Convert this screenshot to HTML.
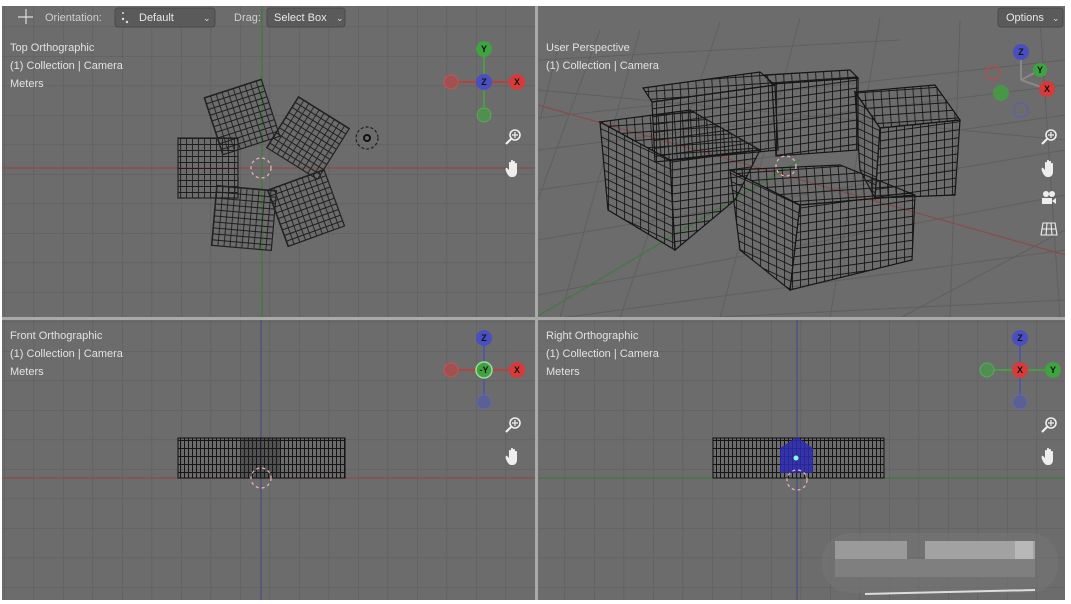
<!DOCTYPE html>
<html><head><meta charset="utf-8"><style>
html,body{margin:0;padding:0;background:#fff;width:1071px;height:604px;overflow:hidden}
svg{display:block}
text{font-family:"Liberation Sans",sans-serif}
</style></head><body>
<svg width="1071" height="604" viewBox="0 0 1071 604" xmlns="http://www.w3.org/2000/svg">
<defs>
<pattern id="g" x="4" y="-3" width="29.5" height="29.5" patternUnits="userSpaceOnUse">
<path d="M0 0H29.5M0 0V29.5" stroke="#5e5e5e" stroke-width="1.2" fill="none"/>
</pattern>
<pattern id="m" width="6" height="6" patternUnits="userSpaceOnUse">
<path d="M0 0.5H6M0.5 0V6" stroke="#1e1e1e" stroke-width="0.9" fill="none"/>
</pattern>
<pattern id="mp" width="8" height="8" patternUnits="userSpaceOnUse" patternTransform="rotate(-4)">
<path d="M0 0.5H8M0.5 0V8" stroke="#181818" stroke-width="0.9" fill="none"/>
</pattern>
<pattern id="mp2" width="8" height="8" patternUnits="userSpaceOnUse" patternTransform="skewY(25)">
<path d="M0 0.5H8M0.5 0V8" stroke="#181818" stroke-width="0.9" fill="none"/>
</pattern>
<pattern id="mp3" width="8" height="8" patternUnits="userSpaceOnUse" patternTransform="skewY(-8)">
<path d="M0 0.5H8M0.5 0V8" stroke="#181818" stroke-width="0.9" fill="none"/>
</pattern>
<pattern id="mv" width="4" height="8" patternUnits="userSpaceOnUse">
<path d="M0.5 0V8M0 0.5H4" stroke="#151515" stroke-width="1" fill="none"/>
</pattern>
<g id="zm"><circle cx="2" cy="-2" r="5" fill="none" stroke="#eee" stroke-width="1.6"/><path d="M-2 2L-7 7" stroke="#eee" stroke-width="2.2"/><path d="M2 -5V1M-1 -2H5" stroke="#eee" stroke-width="1.2"/></g>
<g id="hd"><path d="M-5 6C-7 3-8 0-7-1-6-2-5 0-4 1V-6C-4-7.5-2-7.5-2-6V-1-8C-2-9.5 0-9.5 0-8V-1-7C0-8.5 2-8.5 2-7V-1-5C2-6.5 4-6.5 4-5V3C4 6 2 8 0 8H-2C-3 8-4 7-5 6Z" fill="#eee"/></g>
</defs>
<rect width="1071" height="604" fill="#fff"/>
<rect x="2" y="6" width="1063" height="594" fill="#6c6c6c"/>
<rect x="2" y="6" width="533" height="312" fill="url(#g)"/>
<rect x="2" y="320" width="533" height="280" fill="url(#g)"/>
<rect x="538" y="320" width="527" height="280" fill="url(#g)"/>
<g stroke="#5f5f5f" stroke-width="1" fill="none">
<path d="M538 118L1065 60M538 150L1065 85M538 190L1065 115M538 240L1065 150M538 295L1065 195M560 318L1065 250M700 318L1065 300"/>
<path d="M560 40L540 120M640 30L560 318M720 22L620 318M800 18L720 318M880 18L830 318M960 20L950 318M1040 20L1060 318M600 30L538 200"/>
<path d="M538 90L1065 140M538 60L900 40M900 318L1065 230"/>
</g>
<path d="M538 105L1065 255" stroke="#8a4b4b" stroke-width="1.2"/>
<path d="M538 316L800 160" stroke="#3f7a3f" stroke-width="1.2"/>
<path d="M2 168H535" stroke="#8c4a4a" stroke-width="1.3"/>
<path d="M262 6V318" stroke="#3e7a3e" stroke-width="1.3"/>
<path d="M2 478H535" stroke="#8c4a4a" stroke-width="1.3"/>
<path d="M261 320V600" stroke="#4a4f80" stroke-width="1.3"/>
<path d="M538 478H1065" stroke="#3e7a3e" stroke-width="1.3"/>
<path d="M797 320V600" stroke="#4a4f80" stroke-width="1.3"/>
<rect x="535" y="6" width="3" height="594" fill="#a9a9a9"/>
<rect x="2" y="317" width="1063" height="3" fill="#a9a9a9"/>
<g stroke="#222" stroke-width="1.2">
<rect x="178" y="138" width="60" height="60" fill="url(#m)"/>
<rect x="-30" y="-30" width="60" height="60" fill="url(#m)" transform="translate(242,117) rotate(-18)"/>
<rect x="-30" y="-30" width="60" height="60" fill="url(#m)" transform="translate(308,138) rotate(32)"/>
<rect x="-30" y="-30" width="60" height="60" fill="url(#m)" transform="translate(306,208) rotate(-20)"/>
<rect x="-30" y="-30" width="60" height="60" fill="url(#m)" transform="translate(244,218) rotate(5)"/>
</g>
<circle cx="261" cy="168" r="10" fill="none" stroke="#e8b0b0" stroke-width="1.3" stroke-dasharray="3 3"/>
<circle cx="367" cy="138" r="11" fill="none" stroke="#222" stroke-width="1.2" stroke-dasharray="3 2"/>
<circle cx="367" cy="138" r="3" fill="none" stroke="#111" stroke-width="2"/>
<rect x="178" y="438" width="167" height="40" fill="url(#mv)" stroke="#111"/>
<rect x="240" y="438" width="40" height="40" fill="#222" opacity="0.35"/>
<circle cx="261" cy="478" r="10" fill="none" stroke="#e8b0b0" stroke-width="1.3" stroke-dasharray="3 3"/>
<rect x="713" y="438" width="171" height="40" fill="url(#mv)" stroke="#111"/>
<path d="M780 448L797 437L813 448V473H780Z" fill="#2a2ab0" opacity="0.85"/>
<circle cx="796" cy="458" r="2.5" fill="#8ff"/>
<circle cx="797" cy="480" r="10" fill="none" stroke="#e8b0b0" stroke-width="1.3" stroke-dasharray="3 3"/>
<!-- perspective boxes -->
<g stroke="#161616" stroke-width="1.2">
<polygon points="643,88 760,72 775,85 652,102" fill="url(#mp)"/>
<polygon points="652,102 775,85 778,150 655,162" fill="url(#mp3)"/>
<polygon points="765,75 850,70 858,78 772,84" fill="url(#mp)"/>
<polygon points="772,84 858,78 858,150 776,156" fill="url(#mp3)"/>
<polygon points="855,92 935,85 960,120 880,128" fill="url(#mp)"/>
<polygon points="880,128 960,120 955,195 875,198" fill="url(#mp3)"/>
<polygon points="855,92 880,128 875,198 860,170" fill="url(#mp2)"/>
<polygon points="600,122 690,110 760,150 670,160" fill="url(#mp)"/>
<polygon points="600,122 670,160 675,250 608,210" fill="url(#mp2)"/>
<polygon points="670,160 760,150 735,200 675,250" fill="url(#mp3)"/>
<polygon points="730,170 840,165 915,195 800,205" fill="url(#mp)"/>
<polygon points="730,170 800,205 790,290 740,250" fill="url(#mp2)"/>
<polygon points="800,205 915,195 912,260 790,290" fill="url(#mp3)"/>
</g>
<circle cx="786" cy="166" r="10" fill="none" stroke="#e8b0b0" stroke-width="1.3" stroke-dasharray="3 3"/>
<g fill="#ddd" font-size="11">
<g stroke="#ddd" stroke-width="1.2"><path d="M26 9V24M18 17H33"/></g>
<text x="45" y="21" fill="#cfcfcf">Orientation:</text>
<rect x="115" y="8" width="100" height="19" rx="3" fill="#5a5a5a" stroke="#4a4a4a"/>
<text x="139" y="21" fill="#e8e8e8">Default</text>
<text x="203" y="21" font-size="9">⌄</text>
<circle cx="123" cy="19" r="1.2"/><circle cx="127" cy="22" r="1.2"/><circle cx="123" cy="13" r="1"/>
<text x="234" y="21" fill="#cfcfcf">Drag:</text>
<rect x="267" y="8" width="78" height="19" rx="3" fill="#5a5a5a" stroke="#4a4a4a"/>
<text x="274" y="21" fill="#e8e8e8">Select Box</text>
<text x="336" y="21" font-size="9">⌄</text>
<rect x="998" y="8" width="65" height="19" rx="3" fill="#5a5a5a" stroke="#4a4a4a"/>
<text x="1006" y="21" fill="#e8e8e8">Options</text>
<text x="1052" y="21" font-size="9">⌄</text>
</g>
<g fill="#e2e2e2" font-size="11">
<text x="10" y="51">Top Orthographic</text><text x="10" y="69">(1) Collection | Camera</text><text x="10" y="87">Meters</text>
<text x="546" y="51">User Perspective</text><text x="546" y="69">(1) Collection | Camera</text>
<text x="10" y="339">Front Orthographic</text><text x="10" y="357">(1) Collection | Camera</text><text x="10" y="375">Meters</text>
<text x="546" y="339">Right Orthographic</text><text x="546" y="357">(1) Collection | Camera</text><text x="546" y="375">Meters</text>
</g>
<g font-size="9" font-weight="bold" text-anchor="middle" fill="#111">
<path d="M451 82H517M484 49V115" stroke="#b84040" stroke-width="2"/><path d="M484 49V115" stroke="#4a9a4a" stroke-width="2"/>
<circle cx="451" cy="82" r="7" fill="#a05050" stroke="#d05050"/><circle cx="484" cy="115" r="7" fill="#4f8f4f" stroke="#5aaa5a"/>
<circle cx="484" cy="49" r="8" fill="#3fa33f"/><text x="484" y="52">Y</text>
<circle cx="517" cy="82" r="8" fill="#d83a3a"/><text x="517" y="85">X</text>
<circle cx="484" cy="82" r="8" fill="#4a4fc0"/><text x="484" y="85">Z</text>
<path d="M451 370H517" stroke="#b84040" stroke-width="2"/><path d="M484 338V402" stroke="#5058a0" stroke-width="2"/>
<circle cx="451" cy="370" r="7" fill="#a05050" stroke="#d05050"/><circle cx="484" cy="402" r="7" fill="#5a5f95" stroke="#6068b0"/>
<circle cx="484" cy="338" r="8" fill="#4a4fc0"/><text x="484" y="341">Z</text>
<circle cx="517" cy="370" r="8" fill="#d83a3a"/><text x="517" y="373">X</text>
<circle cx="484" cy="370" r="8" fill="#3fa33f" stroke="#9be09b" stroke-width="1.5"/><text x="484" y="373">-Y</text>
<path d="M987 370H1053" stroke="#4a9a4a" stroke-width="2"/><path d="M1020 338V402" stroke="#5058a0" stroke-width="2"/>
<circle cx="987" cy="370" r="7" fill="#4f8f4f" stroke="#5aaa5a"/><circle cx="1020" cy="402" r="7" fill="#5a5f95" stroke="#6068b0"/>
<circle cx="1020" cy="338" r="8" fill="#4a4fc0"/><text x="1020" y="341">Z</text>
<circle cx="1053" cy="370" r="8" fill="#3fa33f"/><text x="1053" y="373">Y</text>
<circle cx="1020" cy="370" r="8" fill="#d83a3a"/><text x="1020" y="373">X</text>
<path d="M1021 80V52M1021 80L1040 70M1021 80L1047 89" stroke="#888" stroke-width="2"/>
<circle cx="993" cy="73" r="7" fill="none" stroke="#c04848" stroke-width="1.2"/>
<circle cx="1001" cy="93" r="8" fill="#3fa33f" opacity="0.8"/>
<circle cx="1021" cy="110" r="7" fill="none" stroke="#5a5fb0" stroke-width="1.2"/>
<circle cx="1021" cy="52" r="8" fill="#4a4fc0"/><text x="1021" y="55">Z</text>
<circle cx="1040" cy="70" r="7" fill="#3fa33f"/><text x="1040" y="73">Y</text>
<circle cx="1047" cy="89" r="8" fill="#d83a3a"/><text x="1047" y="92">X</text>
</g>
<use href="#zm" x="513" y="137"/><use href="#hd" x="513" y="169"/>
<use href="#zm" x="1049" y="137"/><use href="#hd" x="1049" y="169"/>
<use href="#zm" x="513" y="425"/><use href="#hd" x="513" y="457"/>
<use href="#zm" x="1049" y="425"/><use href="#hd" x="1049" y="457"/>
<g fill="#eee"><circle cx="1046" cy="194" r="3"/><circle cx="1052" cy="194" r="3"/><rect x="1042" y="198" width="10" height="6"/><path d="M1052 201L1056 198V204Z"/></g>
<g stroke="#eee" stroke-width="1.1" fill="none"><path d="M1043 223H1055L1057 235H1041Z M1042 229H1056M1047 223L1046 235M1051 223L1052 235"/></g>
<rect x="822" y="533" width="236" height="60" rx="28" fill="#747474" opacity="0.6"/>
<rect x="835" y="541" width="72" height="18" fill="#9a9a9a"/>
<rect x="925" y="541" width="110" height="18" fill="#a2a2a2"/>
<rect x="1015" y="541" width="18" height="18" fill="#b8b8b8"/>
<rect x="835" y="559" width="200" height="18" fill="#7f7f7f"/>
<path d="M865 594L1035 590" stroke="#ddd" stroke-width="2"/>
</svg>
</body></html>
